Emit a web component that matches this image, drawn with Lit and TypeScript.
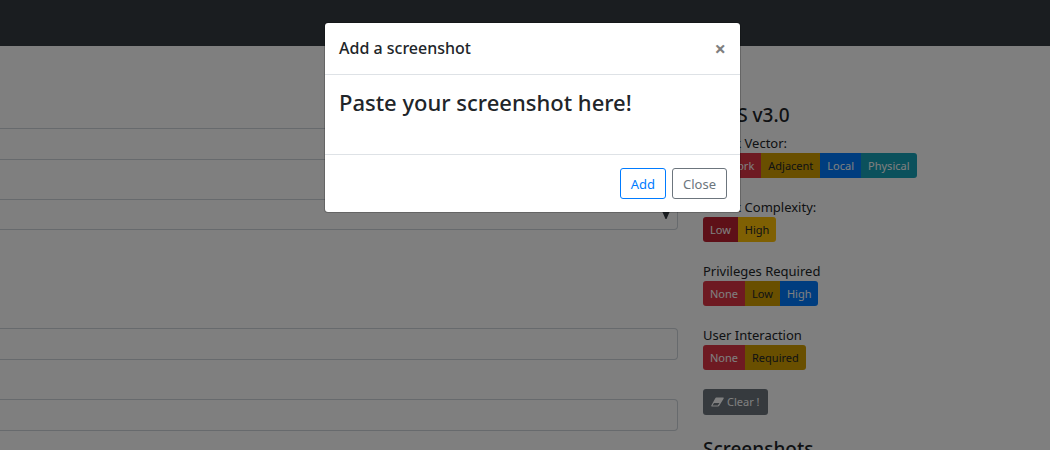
import { LitElement, html, css } from "lit";
import { customElement } from "lit/decorators.js";

type Choice = { label: string; tone: string };
type Metric = { title: string; choices: Choice[] };

const METRICS: Metric[] = [
  {
    title: "Attack Vector:",
    choices: [
      { label: "Network", tone: "danger" },
      { label: "Adjacent", tone: "amber" },
      { label: "Local", tone: "primary" },
      { label: "Physical", tone: "info" },
    ],
  },
  {
    title: "Attack Complexity:",
    choices: [
      { label: "Low", tone: "danger-active" },
      { label: "High", tone: "warning" },
    ],
  },
  {
    title: "Privileges Required",
    choices: [
      { label: "None", tone: "danger" },
      { label: "Low", tone: "amber" },
      { label: "High", tone: "primary" },
    ],
  },
  {
    title: "User Interaction",
    choices: [
      { label: "None", tone: "danger" },
      { label: "Required", tone: "amber" },
    ],
  },
];

@customElement("app-root")
export class AppRoot extends LitElement {
  static styles = css`
    :host {
      display: block;
      position: relative;
      height: 100vh;
      overflow: hidden;
      background: #fff;
      color: #212529;
      font-family: "Segoe UI", "Noto Sans", "Open Sans", sans-serif;
      font-size: 13px;
      line-height: 20px;
    }
    * {
      box-sizing: border-box;
    }
    button,
    input,
    select {
      font: inherit;
      margin: 0;
    }
    h2,
    h3,
    h4 {
      margin: 0;
      font-weight: 500;
    }
    .navbar {
      height: 46px;
      background: #343a40;
    }
    .content {
      display: grid;
      grid-template-columns: minmax(0, 678px) minmax(0, 1fr);
      column-gap: 25px;
    }
    .form {
      display: flex;
      flex-direction: column;
      padding-top: 82px;
    }
    .field {
      display: block;
      width: 100%;
      height: 32px;
      border: 1px solid #ced4da;
      border-left: 0;
      border-radius: 0 4px 4px 0;
      background: #fff;
      padding: 0 12px;
    }
    .select-wrap {
      display: grid;
      align-items: center;
      margin-top: 39px;
    }
    .select-wrap > * {
      grid-area: 1 / 1;
    }
    .select {
      appearance: none;
      height: 31px;
    }
    .caret {
      justify-self: end;
      margin-right: 8px;
      width: 8px;
      height: 8px;
      fill: #343a40;
      pointer-events: none;
    }
    .far {
      margin-top: 98px;
    }
    .near {
      margin-top: 39px;
    }
    .side {
      padding-top: 57px;
    }
    .side-title {
      font-size: 19px;
      line-height: 24px;
    }
    .metric {
      margin: 0 0 19px;
      padding: 0;
      border: 0;
    }
    .side-title + .metric {
      margin-top: 6px;
    }
    .metric-title {
      padding: 0;
    }
    .group {
      display: flex;
    }
    .choice {
      height: 25px;
      padding: 0 7px;
      border: 0;
      font-size: 11px;
      color: #fff;
    }
    .choice:first-child {
      border-radius: 3px 0 0 3px;
    }
    .choice:last-child {
      border-radius: 0 3px 3px 0;
    }
    .danger {
      background: #dc3545;
    }
    .danger-active {
      background: #bd2130;
    }
    .amber {
      background: #d39e00;
      color: #212529;
    }
    .warning {
      background: #ffc107;
      color: #212529;
    }
    .primary {
      background: #007bff;
    }
    .info {
      background: #17a2b8;
    }
    .clear {
      display: flex;
      align-items: center;
      gap: 3px;
      height: 26px;
      padding: 0 8px;
      border: 0;
      border-radius: 3px;
      background: #6c757d;
      color: #fff;
      font-size: 11px;
    }
    .eraser {
      width: 13px;
      height: 10px;
      fill: currentColor;
    }
    .shots-title {
      margin-top: 22px;
    }
    .backdrop {
      position: absolute;
      inset: 0;
      display: flex;
      justify-content: center;
      align-items: flex-start;
      padding: 22px 0 0 15px;
      background: rgba(0, 0, 0, 0.5);
    }
    .modal {
      width: 417px;
      max-width: 100%;
      border: 1px solid rgba(0, 0, 0, 0.2);
      border-radius: 4px;
      background: #fff;
      background-clip: padding-box;
    }
    .modal-head {
      display: flex;
      justify-content: space-between;
      align-items: center;
      padding: 13px 14px;
      border-bottom: 1px solid #dee2e6;
    }
    .modal-title {
      font-size: 16px;
      line-height: 25px;
    }
    .close {
      padding: 0;
      border: 0;
      background: none;
      color: #7f7f7f;
      font-size: 20px;
      font-weight: 700;
      line-height: 25px;
    }
    .modal-body {
      padding: 14px 14px 39px;
    }
    .paste {
      font-size: 22px;
      line-height: 26px;
    }
    .modal-foot {
      display: flex;
      justify-content: flex-end;
      gap: 6px;
      padding: 13px;
      border-top: 1px solid #dee2e6;
    }
    .btn {
      height: 31px;
      padding: 0 10px;
      border: 1px solid currentColor;
      border-radius: 3px;
      background: #fff;
    }
    .add {
      color: #007bff;
    }
    .dismiss {
      color: #6c757d;
    }
  `;

  private metric(m: Metric) {
    return html`<fieldset class="metric">
      <legend class="metric-title">${m.title}</legend>
      <div class="group">
        ${m.choices.map((c) => html`<button type="button" class="choice ${c.tone}">${c.label}</button>`)}
      </div>
    </fieldset>`;
  }

  render() {
    return html`
      <header class="navbar"></header>
      <main class="content">
        <form class="form">
          <input class="field" type="text" aria-label="Title" />
          <div class="select-wrap">
            <select class="field select" aria-label="Category"></select>
            <svg class="caret" viewBox="0 0 8 8" aria-hidden="true"><path d="M0 0H8L4.5 8H3.5z" /></svg>
          </div>
          <input class="field far" type="text" aria-label="Source" />
          <input class="field near" type="text" aria-label="Reference" />
        </form>
        <aside class="side">
          <h3 class="side-title">CVSS v3.0</h3>
          ${METRICS.map((m) => this.metric(m))}
          <button type="button" class="clear">
            <svg class="eraser" viewBox="0 0 13 10" aria-hidden="true">
              <path fill-rule="evenodd" d="M5.2 0.5H12.2Q13 0.6 12.7 1.6L8.2 8.7Q7.8 9.5 7 9.5H0.8Q0 9.4 0.3 8.5L4.3 1.2Q4.7 0.5 5.2 0.5zM3 6L1.5 8.5H6.8L8.5 6z" />
            </svg>
            Clear !
          </button>
          <h3 class="side-title shots-title">Screenshots</h3>
        </aside>
      </main>
      <div class="backdrop">
        <section class="modal" role="dialog" aria-modal="true" aria-labelledby="modal-title">
          <header class="modal-head">
            <h4 class="modal-title" id="modal-title">Add a screenshot</h4>
            <button type="button" class="close" aria-label="Close dialog">×</button>
          </header>
          <div class="modal-body"><h2 class="paste">Paste your screenshot here!</h2></div>
          <footer class="modal-foot">
            <button type="button" class="btn add">Add</button>
            <button type="button" class="btn dismiss">Close</button>
          </footer>
        </section>
      </div>
    `;
  }
}
